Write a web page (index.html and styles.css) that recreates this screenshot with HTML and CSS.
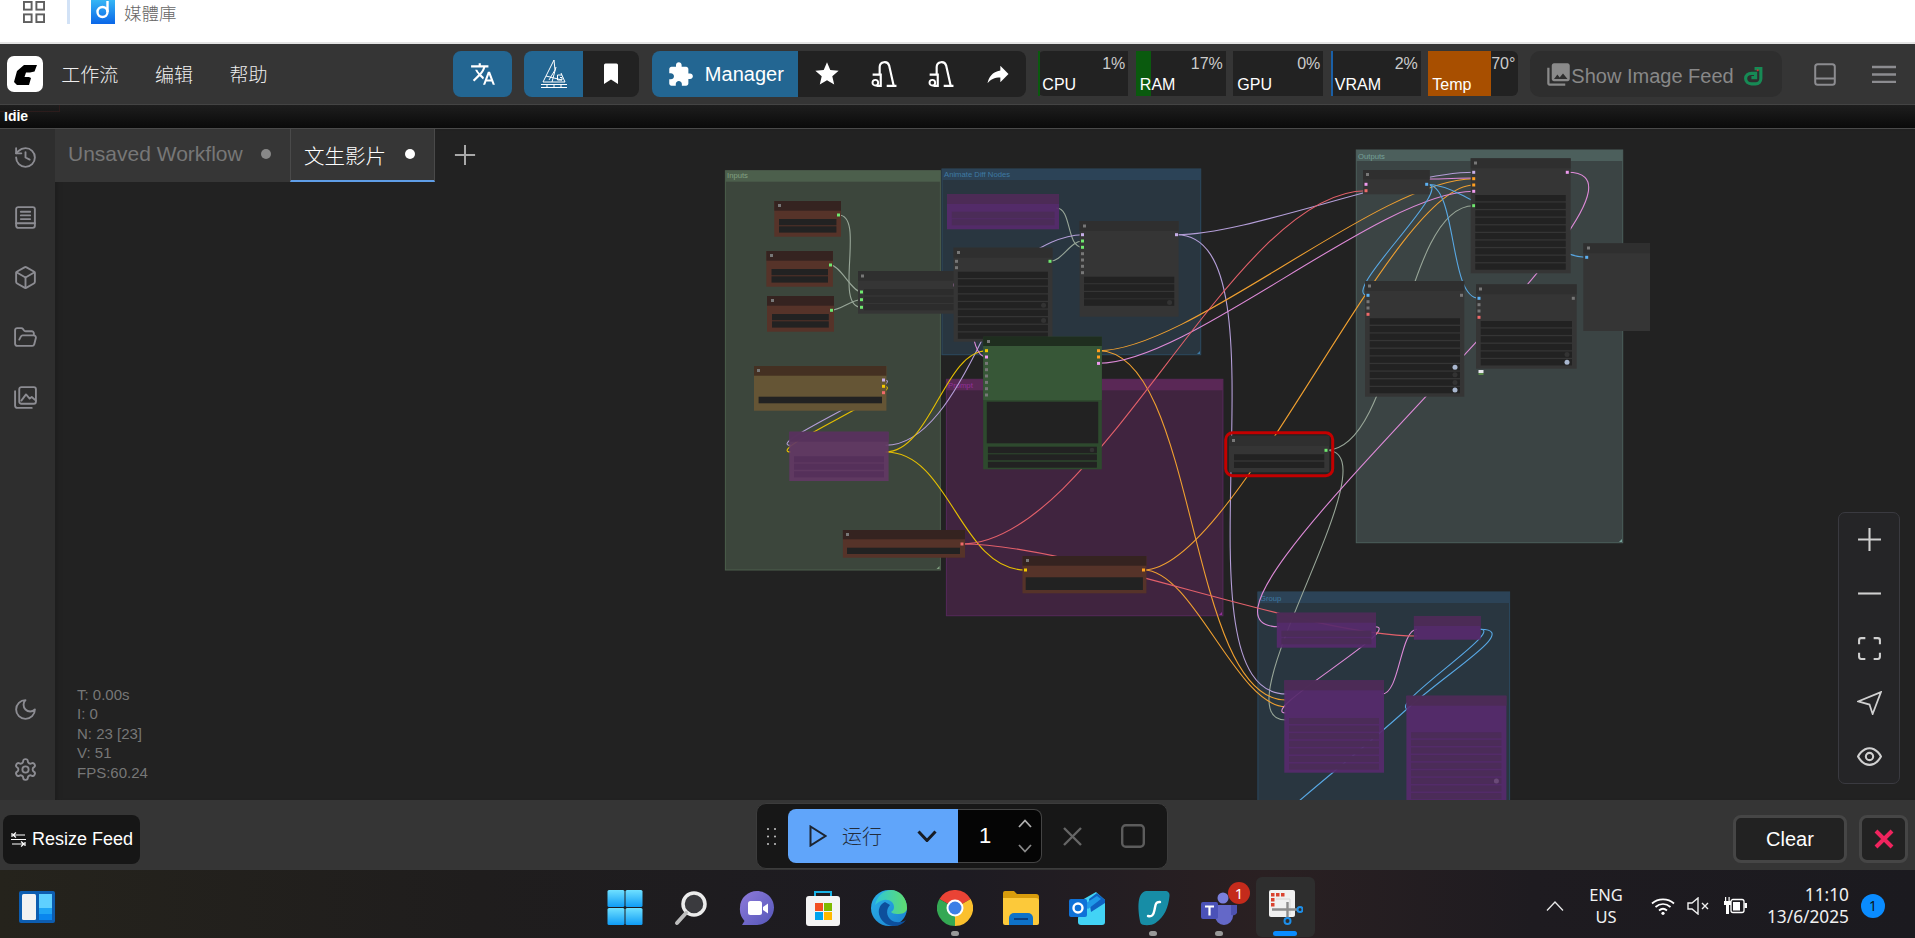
FILE: index.html
```html
<!DOCTYPE html>
<html lang="zh">
<head>
<meta charset="utf-8">
<title>ComfyUI</title>
<link rel="stylesheet" href="styles.css">
</head>
<body>
<header class="browserbar">
  <svg class="apps" viewBox="0 0 23 23"><g fill="none" stroke="#5f5f5f" stroke-width="2"><rect x="1" y="1" width="8" height="8"/><rect x="14" y="1" width="8" height="8"/><rect x="1" y="14" width="8" height="8"/><rect x="14" y="14" width="8" height="8"/></g></svg>
  <span class="browser-divider"></span>
  <svg class="doc-icon" viewBox="0 0 24 24"><defs><linearGradient id="dg" x1="0" y1="0" x2="0" y2="1"><stop offset="0" stop-color="#35b6f5"/><stop offset="1" stop-color="#0a66e8"/></linearGradient></defs><rect width="24" height="24" fill="url(#dg)"/><circle cx="11.500" cy="12" r="5" fill="none" stroke="#fff" stroke-width="2.400"/><path d="M16.500 1v11" stroke="#fff" stroke-width="2.400"/></svg>
  <span class="doc-title">媒體庫</span>
</header>

<nav class="menubar">
  <svg class="logo" viewBox="0 0 36 36"><rect width="36" height="36" rx="7" fill="#fff"/><path d="M17 9H30L27.500 15.500 23 16.500H19L17.500 21H22L24 22 22 29H10L7 26 10 15Z" fill="#000"/></svg>
  <div class="menu">
    <span class="menu-item">工作流</span><span class="menu-item">编辑</span><span class="menu-item">帮助</span>
  </div>
  <button class="tool blue translate"><svg class="ic26" viewBox="0 0 24 24"><path fill="#fff" d="M12.870 15.070l-2.540-2.510.03-.03c1.740-1.940 2.980-4.170 3.710-6.530H17V4h-7V2H8v2H1v1.990h11.170C11.500 7.920 10.440 9.750 9 11.350 8.070 10.320 7.300 9.190 6.690 8h-2c.73 1.630 1.730 3.170 2.980 4.560l-5.090 5.020L4 19l5-5 3.110 3.110.76-2.040zM18.500 10h-2L12 22h2l1.120-3h4.750L21 22h2l-4.500-12zm-2.620 7l1.620-4.330L19.120 17h-3.240z"/></svg></button>
  <div class="toolgroup g-crane">
    <button class="tool blue seg59"><svg class="ic30" viewBox="0 0 28 30"><g fill="none" stroke="#fff" stroke-width="1"><path d="M14 1 3 23H25L21 14"/><path d="M14 1 15 11 9 21M16 8 12 23M6 17 22 21"/><path d="M22 16H17.500V21H22V18.500H20"/><path d="M1 25.500H27M1 28.500H27M7 25.500V28.500M14 25.500V28.500M21 25.500V28.500"/></g></svg></button>
    <button class="tool dark seg56"><svg class="ic24" viewBox="0 0 24 24"><path fill="#fff" d="M5 3a1.500 1.500 0 0 1 1.500-1.500h11A1.500 1.500 0 0 1 19 3v19l-7-4.500L5 22z"/></svg></button>
  </div>
  <div class="toolgroup g-manager">
    <button class="tool blue manager"><svg class="ic27" viewBox="0 0 24 24"><path fill="#fff" d="M20.500 11H19V7c0-1.100-.9-2-2-2h-4V3.500C13 2.120 11.880 1 10.500 1S8 2.120 8 3.500V5H4c-1.100 0-1.990.9-1.990 2v3.800H3.500c1.490 0 2.700 1.210 2.700 2.700s-1.210 2.700-2.700 2.700H2V20c0 1.100.9 2 2 2h3.800v-1.500c0-1.490 1.210-2.700 2.700-2.700 1.490 0 2.700 1.210 2.700 2.700V22H17c1.100 0 2-.9 2-2v-4h1.500c1.380 0 2.500-1.120 2.500-2.500S21.880 11 20.500 11z"/></svg><span>Manager</span></button>
    <button class="tool dark seg57"><svg class="ic28" viewBox="0 0 24 24"><path fill="#fff" d="M12 17.270 18.180 21l-1.640-7.030L22 9.240l-7.190-.61L12 2 9.190 8.630 2 9.240l5.460 4.730L5.820 21z"/></svg></button>
    <button class="tool dark seg57"><svg class="ic26" viewBox="0 0 24 24"><g fill="none" stroke="#fff" stroke-width="2"><path d="M8 12V5.500a4.500 4.500 0 0 1 8.800-1.200L21 23"/><path d="M14.500 23h9"/><path d="M1.500 12.500h7.500V23H5"/></g><circle cx="4" cy="20" r="2.600" fill="none" stroke="#fff" stroke-width="1.800"/></svg></button>
    <button class="tool dark seg57"><svg class="ic26" viewBox="0 0 24 24"><g fill="none" stroke="#fff" stroke-width="2"><path d="M8 12V5.500a4.500 4.500 0 0 1 8.800-1.200L21 23"/><path d="M14.500 23h9"/><path d="M1.500 12.500h7.500V23H5"/></g><circle cx="4" cy="20" r="2.600" fill="none" stroke="#fff" stroke-width="1.800"/></svg></button>
    <button class="tool dark seg57"><svg class="ic28" viewBox="0 0 24 24"><path fill="#fff" d="M14 9V5l7 7-7 7v-4.100c-5 0-8.500 1.600-11 5.100 1-5 4-10 11-11z"/></svg></button>
  </div>
  <div class="monitors">
    <div class="mon first"><i class="bar green" style="width:2px"></i><b>1%</b><span>CPU</span></div>
    <div class="mon"><i class="bar green" style="width:17%"></i><b>17%</b><span>RAM</span></div>
    <div class="mon"><i class="bar green" style="width:0"></i><b>0%</b><span>GPU</span></div>
    <div class="mon"><i class="bar blue" style="width:2%"></i><b>2%</b><span>VRAM</span></div>
    <div class="mon last"><i class="bar orange" style="width:70%"></i><b>70°</b><span>Temp</span></div>
  </div>
  <button class="feed-toggle">
    <svg class="ic27" viewBox="0 0 24 24"><path fill="#8a8a8a" d="M22 16V4c0-1.100-.9-2-2-2H8c-1.100 0-2 .9-2 2v12c0 1.100.9 2 2 2h12c1.100 0 2-.9 2-2zm-11-4 2.030 2.710L16 11l4 5H8l3-4zM2 6v14c0 1.100.9 2 2 2h14v-2H4V6H2z"/></svg>
    <span>Show Image Feed</span>
    <svg class="snake" viewBox="0 0 20 20"><path fill="none" stroke="#178a55" stroke-width="3" d="M11 2.500h6V12c0 3-2 5-5 5H8c-3 0-5.500-2-5.500-5S5 7 8 7h4v4H8"/><circle cx="14" cy="4" r="1" fill="#c33"/></svg>
  </button>
  <svg class="panel-icon" viewBox="0 0 22 23"><rect x="1.200" y="1.200" width="19.600" height="20.600" rx="2.500" fill="none" stroke="#8c8c90" stroke-width="2"/><path d="M1.500 15.500h19" stroke="#8c8c90" stroke-width="2"/></svg>
  <svg class="burger" viewBox="0 0 24 18"><path d="M0 2h24M0 9.500h24M0 17h24" stroke="#8c8c90" stroke-width="2.400"/></svg>
</nav>

<div class="statusbar"><span class="status-mark"></span>Idle</div>

<main class="workspace">
  <aside class="sidebar">
    <div class="side-group top">
      <button class="side-btn"><svg viewBox="0 0 24 24"><path d="M3 12a9 9 0 1 0 9-9 9.750 9.750 0 0 0-6.740 2.740L3 8"/><path d="M3 3v5h5"/><path d="M12 7v5l4 2"/></svg></button>
      <button class="side-btn"><svg viewBox="0 0 24 24"><rect x="3" y="2" width="18" height="20" rx="2"/><path d="M3 17.500h18M7.500 6.500h9M7.500 10h9M7.500 13.500h9"/></svg></button>
      <button class="side-btn"><svg viewBox="0 0 24 24"><path d="M21 8a2 2 0 0 0-1-1.730l-7-4a2 2 0 0 0-2 0l-7 4A2 2 0 0 0 3 8v8a2 2 0 0 0 1 1.730l7 4a2 2 0 0 0 2 0l7-4A2 2 0 0 0 21 16Z"/><path d="m3.300 7 8.700 5 8.700-5"/><path d="M12 22V12"/></svg></button>
      <button class="side-btn"><svg viewBox="0 0 24 24"><path d="m6 14 1.500-2.900A2 2 0 0 1 9.240 10H20a2 2 0 0 1 1.940 2.500l-1.540 6a2 2 0 0 1-1.950 1.500H4a2 2 0 0 1-2-2V5a2 2 0 0 1 2-2h3.900a2 2 0 0 1 1.690.9l.81 1.200a2 2 0 0 0 1.670.9H18a2 2 0 0 1 2 2v2"/></svg></button>
      <button class="side-btn"><svg viewBox="0 0 24 24"><path d="M18 22H4a2 2 0 0 1-2-2V6"/><rect width="16" height="16" x="6" y="2" rx="2"/><path d="m8 15 4.500-6 3.500 4 2-1.500 4 3.500"/></svg></button>
    </div>
    <div class="side-group">
      <button class="side-btn"><svg viewBox="0 0 24 24"><path d="M12 3a6 6 0 0 0 9 9 9 9 0 1 1-9-9Z"/></svg></button>
      <button class="side-btn"><svg viewBox="0 0 24 24"><path d="M12.220 2h-.44a2 2 0 0 0-2 2v.18a2 2 0 0 1-1 1.730l-.43.25a2 2 0 0 1-2 0l-.15-.08a2 2 0 0 0-2.730.73l-.22.38a2 2 0 0 0 .73 2.730l.15.1a2 2 0 0 1 1 1.720v.51a2 2 0 0 1-1 1.740l-.15.09a2 2 0 0 0-.73 2.730l.22.38a2 2 0 0 0 2.730.73l.15-.08a2 2 0 0 1 2 0l.43.25a2 2 0 0 1 1 1.730V20a2 2 0 0 0 2 2h.44a2 2 0 0 0 2-2v-.18a2 2 0 0 1 1-1.730l.43-.25a2 2 0 0 1 2 0l.15.08a2 2 0 0 0 2.730-.73l.22-.39a2 2 0 0 0-.73-2.730l-.15-.08a2 2 0 0 1-1-1.740v-.5a2 2 0 0 1 1-1.740l.15-.09a2 2 0 0 0 .73-2.730l-.22-.38a2 2 0 0 0-2.730-.73l-.15.08a2 2 0 0 1-2 0l-.43-.25a2 2 0 0 1-1-1.730V4a2 2 0 0 0-2-2z"/><circle cx="12" cy="12" r="3"/></svg></button>
    </div>
  </aside>

  <section class="canvas-area">
    <svg class="graph" viewBox="55 129 1860 671">
      <!-- groups -->
      <g class="group g-in"><rect class="gb" x="725.400" y="170.700" width="215" height="399.300"/><rect class="gh" x="725.400" y="170.700" width="215" height="11"/><text x="727" y="178">Inputs</text><path class="gc" d="M939.500 569V566L936.500 569Z"/></g>
      <g class="group g-ad"><rect class="gb" x="942" y="169" width="258.700" height="185.700"/><rect class="gh" x="942" y="169" width="258.700" height="11"/><text x="944" y="177">Animate Diff Nodes</text><path class="gc" d="M1200 354V351L1197 354Z"/></g>
      <g class="group g-pr"><rect class="gb" x="946.400" y="379.300" width="276.500" height="236.400"/><rect class="gh" x="946.400" y="379.300" width="276.500" height="11"/><text x="948" y="387.500">Prompt</text><path class="gc" d="M1222 615V612L1219 615Z"/></g>
      <g class="group g-out"><rect class="gb" x="1356.300" y="150" width="266.400" height="392.700"/><rect class="gh" x="1356.300" y="150" width="266.400" height="11"/><text x="1358" y="158.500">Outputs</text><path class="gc" d="M1622 542V539L1619 542Z"/></g>
      <g class="group g-gr"><rect class="gb" x="1257.900" y="592" width="251.700" height="230"/><rect class="gh" x="1257.900" y="592" width="251.700" height="11"/><text x="1260" y="600.500">Group</text></g>

      <!-- links -->
      <g class="wires">
        <path class="w-g" d="M838.600 215C866 215 833 307.300 861.400 307.300"/>
        <path class="w-g" d="M830.400 265C840 265 852 292 861.400 292"/>
        <path class="w-g" d="M831 310.300C841 310.300 851 299.700 861.400 299.700"/>
        <path class="w-g" d="M1056.400 208C1072 208 1066 247.300 1082.500 247.300"/>
        <path class="w-g" d="M1050 261.300C1062 261.300 1070 241 1082.500 241"/>
        <path class="w-g" d="M1326 450.300C1398 450.300 1402 205.700 1473.700 205.700"/>
        <path class="w-g" d="M1326 450.300C1398 450.300 1214 720 1286 720"/>
        <path class="w-l" d="M955 285C1000 285 1040 234.700 1082.500 234.700"/>
        <path class="w-l" d="M1176.400 234.700C1250 234.700 1400 172.300 1473.700 172.300"/>
        <path class="w-l" d="M1176.400 234.700C1296 234.700 1166 694 1286.400 694"/>
        <path class="w-l" d="M883.600 380C913 380 761 445.300 791 445.300"/>
        <path class="w-l" d="M885.700 445.300C925 445.300 955 395 982 340"/>
        <path class="w-y" d="M883.600 386.300C913 386.300 761 452 791 452"/>
        <path class="w-y" d="M885.700 452C930 452 945 350.700 986.400 350.700"/>
        <path class="w-y" d="M885.700 452C950 452 960 570 1025.400 570"/>
        <path class="w-p" d="M955 285C975 285 966 357 986.400 357"/>
        <path class="w-o" d="M1098.600 350.700C1197.600 350.700 1187 700 1286 700"/>
        <path class="w-o" d="M1098.600 350.700C1190 350.700 1380 178.700 1473.700 178.700"/>
        <path class="w-o" d="M1143.600 570C1235 570 1392 185 1473.700 185"/>
        <path class="w-o" d="M1143.600 570C1193 570 1237 706.700 1286 706.700"/>
        <path class="w-p" d="M1098.600 363.300C1190 363.300 1380 191.300 1473.700 191.300"/>
        <path class="w-p" d="M1429 179C1445 179 1458 178 1473.700 178"/>
        <path class="w-p" d="M1567.300 172.300C1703 172.300 1143 626.700 1279 626.700"/>
        <path class="w-p" d="M1375 626.700C1406 626.700 1255 713 1286 713"/>
        <path class="w-p" d="M1382 694C1400 694 1400 629.300 1417 629.300"/>
        <path class="w-r" d="M962 544C1096 544 1232 190.700 1366 190.700"/>
        <path class="w-r" d="M962 544C1077 544 1302 636 1417 636"/>
        <path class="w-b" d="M1426.700 184.300C1469 184.300 1544 257.300 1586.700 257.300"/>
        <path class="w-b" d="M1426.700 184.300C1458 184.300 1448 298.300 1479 298.300"/>
        <path class="w-b" d="M1426.700 184.300C1458 184.300 1337 295.300 1368 295.300"/>
        <path class="w-b" d="M1480.400 629.300C1506 629.300 1383 709 1409 709"/>
        <path class="w-b" d="M1480.400 629.300C1520 629.300 1450 670 1407 709S1320 782 1270 826"/>
      </g>

      <!-- brown nodes -->
      <g class="node brown">
        <rect class="body" x="774.300" y="201" width="66.700" height="35.700"/><rect class="head" x="774.300" y="201" width="66.700" height="9.700"/><rect class="pin" x="778" y="204"/>
        <rect class="row" x="779" y="219" width="57.400" height="6.300"/><rect class="row" x="779" y="226.300" width="57.400" height="6.300"/><rect class="d green" x="837" y="213.500"/>
      </g>
      <g class="node brown">
        <rect class="body" x="766.400" y="251" width="66.500" height="35.700"/><rect class="head" x="766.400" y="251" width="66.500" height="9.700"/><rect class="pin" x="770" y="254"/>
        <rect class="row" x="771.500" y="269" width="56.500" height="6.300"/><rect class="row" x="771.500" y="276.300" width="56.500" height="6.300"/><rect class="d green" x="829" y="263.500"/>
      </g>
      <g class="node brown">
        <rect class="body" x="767" y="296" width="67" height="35.700"/><rect class="head" x="767" y="296" width="67" height="9.700"/><rect class="pin" x="771" y="299"/>
        <rect class="row" x="772" y="314" width="56.800" height="6.300"/><rect class="row" x="772" y="321.300" width="56.800" height="6.300"/><rect class="d green" x="830" y="308.800"/>
      </g>

      <!-- dark nodes -->
      <g class="node dark">
        <rect class="body" x="858" y="271" width="99" height="42.700"/><rect class="head" x="858" y="271" width="99" height="9.700"/><rect class="pin" x="861" y="274.500"/>
        <rect class="row soft" x="864" y="289" width="90" height="6.300"/><rect class="row soft" x="864" y="296.700" width="90" height="6.300"/><rect class="row soft" x="864" y="304" width="90" height="6.300"/>
        <rect class="d green" x="860" y="290.500"/><rect class="d green" x="860" y="298.200"/><rect class="d green" x="860" y="305.800"/><rect class="d pink" x="953.500" y="283.500"/>
      </g>
      <g class="node dark">
        <rect class="body" x="953.600" y="247.700" width="98.900" height="94"/><rect class="head" x="953.600" y="247.700" width="98.900" height="10"/><rect class="pin" x="957" y="251"/>
        <rect class="d gray" x="955" y="259.800"/><rect class="d gray" x="955" y="266.200"/><rect class="d green" x="1048.500" y="259.800"/>
        <rect class="row" x="957.900" y="271.700" width="90" height="6.300"/><rect class="row" x="957.900" y="279.300" width="90" height="6.300"/><rect class="row" x="957.900" y="286.900" width="90" height="6.300"/><rect class="row" x="957.900" y="294.500" width="90" height="6.300"/><rect class="row" x="957.900" y="302.100" width="90" height="6.300"/><rect class="row" x="957.900" y="309.700" width="90" height="6.300"/><rect class="row" x="957.900" y="317.300" width="90" height="6.300"/><rect class="row" x="957.900" y="324.900" width="90" height="6.300"/><rect class="row" x="957.900" y="332.500" width="90" height="6.300"/>
        <circle class="tg off" cx="1043.600" cy="305.200" r="2.500"/><circle class="tg off" cx="1043.600" cy="320.400" r="2.500"/>
      </g>
      <g class="node dark">
        <rect class="body" x="1079.600" y="221" width="99" height="95.700"/><rect class="head" x="1079.600" y="221" width="99" height="10"/><rect class="pin" x="1083" y="224.500"/>
        <rect class="d lav" x="1081" y="233.200"/><rect class="d green" x="1081" y="239.500"/><rect class="d green" x="1081" y="245.800"/><rect class="d gray" x="1081" y="252.200"/><rect class="d gray" x="1081" y="258.500"/><rect class="d gray" x="1081" y="264.800"/><rect class="d gray" x="1081" y="271.200"/><rect class="d lav" x="1175" y="233.200"/>
        <rect class="row" x="1084" y="276.700" width="90.300" height="6.500"/><rect class="row" x="1084" y="284.300" width="90.300" height="6.500"/><rect class="row" x="1084" y="292" width="90.300" height="6.500"/><rect class="row" x="1084" y="299.300" width="90.300" height="6.500"/><circle class="tg off" cx="1169.600" cy="302.500" r="2.500"/>
      </g>

      <!-- purple node in AnimateDiff -->
      <g class="node purple">
        <rect class="body" x="947" y="194" width="112" height="35.300"/><rect class="head" x="947" y="194" width="112" height="10"/>
        <rect class="row" x="951.800" y="211.700" width="102.800" height="6.600"/><rect class="row" x="951.800" y="219.300" width="102.800" height="6"/>
      </g>

      <!-- green sampler -->
      <g class="node greenn">
        <rect class="frame" x="983.200" y="336.700" width="118.600" height="132.600"/><rect class="head" x="983.200" y="336.700" width="118.600" height="9.300"/><rect class="body" x="983.200" y="346" width="118.600" height="54"/><rect class="pin" x="987" y="340"/>
        <rect class="d yel" x="985" y="349.200"/><rect class="d pink" x="985" y="355.500"/><rect class="d gray" x="985" y="361.900"/><rect class="d gray" x="985" y="368.200"/><rect class="d gray" x="985" y="374.500"/><rect class="d gray" x="985" y="380.900"/><rect class="d gray" x="985" y="387.200"/><rect class="d gray" x="985" y="393.500"/>
        <rect class="d org" x="1097" y="349.200"/><rect class="d org" x="1097" y="355.500"/><rect class="d pink" x="1097" y="361.900"/>
        <rect class="row" x="986.800" y="401.700" width="111.400" height="41.600"/>
        <rect class="row" x="987.900" y="446.700" width="109" height="6.600"/><rect class="row" x="987.900" y="454.300" width="109" height="6"/><rect class="row" x="987.900" y="461.700" width="109" height="6"/><circle class="tg off" cx="1092" cy="450" r="2.300"/>
      </g>

      <!-- yellow loader -->
      <g class="node yellow">
        <rect class="body" x="754" y="366" width="132.400" height="44.700"/><rect class="head" x="754" y="366" width="132.400" height="9.700"/><rect class="pin" x="757" y="369"/>
        <rect class="row" x="758.600" y="396.700" width="123.400" height="6.600"/>
        <rect class="d lav" x="882" y="378.500"/><rect class="d yel" x="882" y="384.800"/><rect class="d red" x="882" y="391.200"/>
      </g>

      <!-- bypassed lora -->
      <g class="node plum">
        <rect class="body" x="789.300" y="431.700" width="99.300" height="49.300"/><rect class="head" x="789.300" y="431.700" width="99.300" height="10"/>
        <rect class="row" x="794" y="456.300" width="90" height="6"/><rect class="row" x="794" y="463.700" width="90" height="6"/><rect class="row" x="794" y="471.300" width="90" height="6"/>
      </g>

      <!-- brown text nodes -->
      <g class="node brown">
        <rect class="body" x="842.900" y="530" width="122.100" height="27.700"/><rect class="head" x="842.900" y="530" width="122.100" height="9.300"/><rect class="pin" x="846" y="533"/>
        <rect class="row" x="847" y="547.700" width="113" height="6.300"/><rect class="d red" x="960.500" y="542.500"/>
      </g>
      <g class="node brown">
        <rect class="body" x="1022.500" y="556" width="123.900" height="37.300"/><rect class="head" x="1022.500" y="556" width="123.900" height="9.700"/><rect class="pin" x="1026" y="559"/>
        <rect class="row" x="1025.700" y="577.300" width="117.200" height="12.700"/><rect class="d yel" x="1024" y="568.500"/><rect class="d org" x="1142" y="568.500"/>
      </g>

      <!-- selected node -->
      <g class="node dark">
        <rect class="body" x="1229" y="435.700" width="100.300" height="36.600"/><rect class="head" x="1229" y="435.700" width="100.300" height="10.300"/><rect class="pin" x="1232" y="439"/>
        <rect class="row" x="1234" y="454.300" width="90.300" height="6"/><rect class="row" x="1234" y="461.700" width="90.300" height="6.300"/><rect class="d green" x="1324.500" y="448.800"/>
      </g>
      <rect class="selected" x="1225.700" y="432.700" width="107" height="43" rx="7"/>

      <!-- output nodes -->
      <g class="node dark">
        <rect class="body" x="1363" y="170" width="66.700" height="24.300"/><rect class="head" x="1363" y="170" width="66.700" height="9.300"/><rect class="pin" x="1366" y="173"/>
        <rect class="d pink" x="1364.500" y="182.800"/><rect class="d red" x="1364.500" y="189.200"/><rect class="d blue" x="1425.200" y="182.800"/>
      </g>
      <g class="node dark">
        <rect class="body" x="1470.700" y="158.300" width="100" height="115"/><rect class="head" x="1470.700" y="158.300" width="100" height="10"/><rect class="pin" x="1474" y="161.500"/>
        <rect class="d lav" x="1472.200" y="170.800"/><rect class="d org" x="1472.200" y="177.200"/><rect class="d org" x="1472.200" y="183.500"/><rect class="d pink" x="1472.200" y="189.800"/><rect class="d green" x="1472.200" y="204.200"/><rect class="d pink" x="1565.800" y="170.800"/>
        <rect class="row" x="1475.300" y="195" width="90.400" height="6.300"/><rect class="row" x="1475.300" y="202.600" width="90.400" height="6.300"/><rect class="row" x="1475.300" y="210.200" width="90.400" height="6.300"/><rect class="row" x="1475.300" y="217.800" width="90.400" height="6.300"/><rect class="row" x="1475.300" y="225.400" width="90.400" height="6.300"/><rect class="row" x="1475.300" y="233" width="90.400" height="6.300"/><rect class="row" x="1475.300" y="240.600" width="90.400" height="6.300"/><rect class="row" x="1475.300" y="248.200" width="90.400" height="6.300"/><rect class="row" x="1475.300" y="255.800" width="90.400" height="6.300"/><rect class="row" x="1475.300" y="263.400" width="90.400" height="6.300"/>
      </g>
      <g class="node dark">
        <rect class="body" x="1583.300" y="243.300" width="66.700" height="87.700"/><rect class="head" x="1583.300" y="243.300" width="66.700" height="10"/><rect class="pin" x="1587" y="246.500"/><rect class="d blue" x="1585.200" y="255.800"/>
      </g>
      <g class="node dark">
        <rect class="body" x="1365" y="281" width="99.300" height="115.700"/><rect class="head" x="1365" y="281" width="99.300" height="10"/><rect class="pin" x="1368" y="284.500"/>
        <rect class="d blue" x="1366.500" y="293.800"/><rect class="d gray" x="1366.500" y="300.200"/><rect class="d gray" x="1366.500" y="306.500"/><rect class="d red" x="1366.500" y="312.800"/><rect class="d gray" x="1460" y="293.800"/>
        <rect class="row" x="1369.700" y="318.300" width="90.300" height="6.300"/><rect class="row" x="1369.700" y="326" width="90.300" height="6.300"/><rect class="row" x="1369.700" y="333.600" width="90.300" height="6.300"/><rect class="row" x="1369.700" y="341.200" width="90.300" height="6.300"/><rect class="row" x="1369.700" y="348.900" width="90.300" height="6.300"/><rect class="row" x="1369.700" y="356.500" width="90.300" height="6.300"/><rect class="row" x="1369.700" y="364.100" width="90.300" height="6.300"/><rect class="row" x="1369.700" y="371.700" width="90.300" height="6.300"/><rect class="row" x="1369.700" y="379.400" width="90.300" height="6.300"/><rect class="row" x="1369.700" y="387" width="90.300" height="6.300"/>
        <circle class="tg on" cx="1455" cy="367.200" r="2.500"/><circle class="tg off" cx="1455" cy="374.800" r="2.500"/><circle class="tg off" cx="1455" cy="382.500" r="2.500"/><circle class="tg on" cx="1455" cy="390.100" r="2.500"/>
      </g>
      <g class="node dark">
        <rect class="body" x="1476" y="284.300" width="100.700" height="84.400"/><rect class="head" x="1476" y="284.300" width="100.700" height="10"/><rect class="pin" x="1479" y="287.500"/>
        <rect class="d blue" x="1477.500" y="296.800"/><rect class="d gray" x="1477.500" y="303.200"/><rect class="d gray" x="1477.500" y="309.500"/><rect class="d red" x="1477.500" y="315.800"/><rect class="d gray" x="1571.800" y="296.800"/>
        <rect class="row" x="1480.700" y="321" width="91.300" height="6.300"/><rect class="row" x="1480.700" y="328.600" width="91.300" height="6.300"/><rect class="row" x="1480.700" y="336.200" width="91.300" height="6.300"/><rect class="row" x="1480.700" y="343.900" width="91.300" height="6.300"/><rect class="row" x="1480.700" y="351.500" width="91.300" height="6.300"/><rect class="row" x="1480.700" y="359.100" width="91.300" height="6.300"/>
        <circle class="tg off" cx="1567" cy="354.600" r="2.500"/><circle class="tg on" cx="1567" cy="362.300" r="2.500"/>
      </g>
      <rect class="thumb-a" x="1478.500" y="370" width="5" height="3"/><rect class="thumb-b" x="1478.500" y="373" width="5" height="2"/>

      <!-- group nodes (bypassed) -->
      <g class="node purple">
        <rect class="body" x="1276.800" y="612.700" width="99.200" height="35"/><rect class="head" x="1276.800" y="612.700" width="99.200" height="10"/>
        <rect class="row" x="1281.400" y="630.700" width="90" height="6"/><rect class="row" x="1281.400" y="638.300" width="90" height="6"/>
      </g>
      <g class="node purple">
        <rect class="body" x="1413.900" y="616" width="66.800" height="23.700"/><rect class="head" x="1413.900" y="616" width="66.800" height="10"/>
      </g>
      <g class="node purple">
        <rect class="body" x="1284.300" y="680.300" width="99.700" height="92.400"/><rect class="head" x="1284.300" y="680.300" width="99.700" height="10"/>
        <rect class="row" x="1289" y="718" width="90" height="6"/><rect class="row" x="1289" y="725.600" width="90" height="6"/><rect class="row" x="1289" y="733.200" width="90" height="6"/><rect class="row" x="1289" y="740.800" width="90" height="6"/><rect class="row" x="1289" y="748.400" width="90" height="6"/><rect class="row" x="1289" y="756" width="90" height="6"/><rect class="row" x="1289" y="763.600" width="90" height="6"/>
      </g>
      <g class="node purple">
        <rect class="body" x="1406.400" y="695.700" width="100" height="120"/><rect class="head" x="1406.400" y="695.700" width="100" height="10"/>
        <rect class="row" x="1411" y="732.300" width="90.400" height="6"/><rect class="row" x="1411" y="739.900" width="90.400" height="6"/><rect class="row" x="1411" y="747.500" width="90.400" height="6"/><rect class="row" x="1411" y="755.100" width="90.400" height="6"/><rect class="row" x="1411" y="762.700" width="90.400" height="6"/><rect class="row" x="1411" y="770.300" width="90.400" height="6"/><rect class="row" x="1411" y="777.900" width="90.400" height="6"/><rect class="row" x="1411" y="785.500" width="90.400" height="6"/><rect class="row" x="1411" y="793.100" width="90.400" height="6"/>
        <circle class="tg dim" cx="1496.400" cy="781" r="2.500"/>
      </g>
    </svg>

    <div class="tabs">
      <div class="tab"><span class="tab-name muted">Unsaved Workflow</span><i class="tab-dot gray-dot"></i></div>
      <div class="tab active"><span class="tab-name">文生影片</span><i class="tab-dot"></i></div>
      <svg class="tab-add" viewBox="0 0 24 24"><path d="M12 1v22M1 12h22" stroke="#a8a8a8" stroke-width="2.200"/></svg>
    </div>

    <div class="stats"><div>T: 0.00s</div><div>I: 0</div><div>N: 23 [23]</div><div>V: 51</div><div>FPS:60.24</div></div>

    <div class="zoombar">
      <svg viewBox="0 0 24 24"><path d="M12 1v22M1 12h22"/></svg>
      <svg viewBox="0 0 24 24"><path d="M1 12h22"/></svg>
      <svg viewBox="0 0 24 24"><path d="M2 8V4a2 2 0 0 1 2-2h4M16 2h4a2 2 0 0 1 2 2v4M22 16v4a2 2 0 0 1-2 2h-4M8 22H4a2 2 0 0 1-2-2v-4"/></svg>
      <svg viewBox="0 0 24 24" class="thin"><path d="M23 2 1 11l11 3 3 9z"/></svg>
      <svg viewBox="0 0 24 24"><path d="M1 12s4-8 11-8 11 8 11 8-4 8-11 8-11-8-11-8z"/><circle cx="12" cy="12" r="3.500"/></svg>
    </div>
  </section>
</main>

<footer class="bottombar">
  <button class="resize-feed">
    <svg class="resize-ic" viewBox="0 0 15 15"><g fill="none" stroke="#fff" stroke-width="1.200"><path d="M1 1v4M1 3h13M5 .5 2 3l3 2.500"/><path d="M14 10v4M14 12H1M10 9.500l3 2.500-3 2.500"/><path d="M0 7.500h15" stroke-width="1"/></g></svg>
    <span>Resize Feed</span>
  </button>
  <div class="runbar">
    <svg class="grip" viewBox="0 0 9 17"><g fill="#c8c8c8"><circle cx="1" cy="1" r="1"/><circle cx="8" cy="1" r="1"/><circle cx="1" cy="8.500" r="1"/><circle cx="8" cy="8.500" r="1"/><circle cx="1" cy="16" r="1"/><circle cx="8" cy="16" r="1"/></g></svg>
    <button class="run">
      <svg class="play" viewBox="0 0 18 22"><path d="M1.500 1.500 16.500 11 1.500 20.500Z" fill="none" stroke="#1c2430" stroke-width="2"/></svg>
      <span>运行</span>
      <svg class="run-chev" viewBox="0 0 20 12"><path d="M1.500 1.500 10 10.500 18.500 1.500" fill="none" stroke="#171c24" stroke-width="3"/></svg>
    </button>
    <div class="count">
      <span>1</span>
      <div class="steppers">
        <svg viewBox="0 0 14 9"><path d="M1 8 7 1.500 13 8" fill="none" stroke="#b0b0b0" stroke-width="1.800"/></svg>
        <svg viewBox="0 0 14 9"><path d="M1 1 7 7.500 13 1" fill="none" stroke="#8a8a8a" stroke-width="1.800"/></svg>
      </div>
    </div>
    <svg class="run-x" viewBox="0 0 19 19"><path d="M1 1 18 18M18 1 1 18" stroke="#666" stroke-width="2.400"/></svg>
    <svg class="run-stop" viewBox="0 0 24 24"><rect x="1.200" y="1.200" width="21.600" height="21.600" rx="3.500" fill="none" stroke="#5c5c5c" stroke-width="2.400"/></svg>
  </div>
  <button class="feed-btn clear">Clear</button>
  <button class="feed-btn close"><svg viewBox="0 0 20 20"><path d="M2 2 18 18M18 2 2 18" stroke="#f0245e" stroke-width="4"/></svg></button>
</footer>

<div class="taskbar">
  <div class="tb-left">
    <svg class="widgets" viewBox="0 0 36 32"><rect width="36" height="32" rx="2" fill="#0d5db0"/><rect x="3" y="3" width="14" height="26" rx="1.500" fill="#f2f2f2"/><rect x="20" y="3" width="13" height="14" fill="#5fd0ff"/><rect x="20" y="17" width="13" height="6" fill="#1fa5f5"/><rect x="20" y="23" width="13" height="6" fill="#0a86ee"/></svg>
  </div>
  <div class="tb-apps">
    <div class="tile"><svg viewBox="0 0 36 36"><defs><linearGradient id="st" x1="0" y1="0" x2="0" y2="1"><stop offset="0" stop-color="#6fe0ff"/><stop offset="1" stop-color="#0f9cf5"/></linearGradient></defs><g fill="url(#st)"><rect x="0.500" y="0" width="17" height="17" rx="1.500"/><rect x="18.500" y="0" width="17" height="17" rx="1.500"/><rect x="0.500" y="18" width="17" height="17" rx="1.500"/><rect x="18.500" y="18" width="17" height="17" rx="1.500"/></g></svg></div>
    <div class="tile"><svg viewBox="0 0 36 36"><circle cx="21" cy="14" r="11" fill="#3a3a3e" stroke="#ececec" stroke-width="3.500"/><path d="M13 23 4 33" stroke="#bdbdbd" stroke-width="4" stroke-linecap="round"/></svg></div>
    <div class="tile"><svg viewBox="0 0 36 36"><defs><linearGradient id="mt" x1="0" y1="0" x2="1" y2="1"><stop offset="0" stop-color="#8f7bdc"/><stop offset="1" stop-color="#5456b8"/></linearGradient></defs><path d="M18 1c9 0 17 7 17 16.500S27 35 18 35H3l2.500-4A17 17 0 0 1 1 17.500C1 8 9 1 18 1z" fill="url(#mt)"/><rect x="9" y="11" width="14" height="14" rx="2.500" fill="#fff"/><path d="M24 17l5-3.500v10L24 20z" fill="#fff"/></svg></div>
    <div class="tile"><svg viewBox="0 0 36 36"><path d="M10 7V2h16v5" fill="none" stroke="#19b3e6" stroke-width="2"/><rect x="1" y="6" width="34" height="30" rx="3" fill="#f4f4f4"/><rect x="10" y="13" width="8" height="8" fill="#f25022"/><rect x="19" y="13" width="8" height="8" fill="#7fba00"/><rect x="10" y="22" width="8" height="8" fill="#00a4ef"/><rect x="19" y="22" width="8" height="8" fill="#ffb900"/></svg></div>
    <div class="tile"><svg viewBox="0 0 36 36"><defs><linearGradient id="eg" x1="0" y1="0" x2="1" y2="1"><stop offset="0" stop-color="#2bb4e8"/><stop offset="1" stop-color="#1a7fd0"/></linearGradient><linearGradient id="eh" x1="0" y1="0" x2="1" y2="0"><stop offset="0" stop-color="#2fc7d8"/><stop offset="1" stop-color="#5fdc6e"/></linearGradient></defs><circle cx="18" cy="18" r="18" fill="url(#eg)"/><path d="M4 15C6 5 14 0 20 0c9 0 16 8 16 18 0 5-5 6-10 6-3 0-5-1-6-2 2-1 3-3 3-5 0-5-5-8-10-7-4 .7-7 3-9 5z" fill="url(#eh)"/><path d="M14 12c-5 2-8 8-5 15 2 5 8 9 14 9 5 0 9-2 12-6-5 3-11 3-15 0-5-4-5-11-1-15z" fill="#0d4f9c"/></svg></div>
    <div class="tile run-dot"><svg viewBox="0 0 36 36"><path d="M18 18 2.400 9A18 18 0 0 1 33.600 9Z" fill="#ea4335"/><path d="M18 18 33.600 9A18 18 0 0 1 18 36Z" fill="#fbc02d"/><path d="M18 18 18 36A18 18 0 0 1 2.400 9Z" fill="#34a853"/><circle cx="18" cy="18" r="8.500" fill="#fff"/><circle cx="18" cy="18" r="6.500" fill="#3c7fe6"/></svg></div>
    <div class="tile"><svg viewBox="0 0 36 36"><path d="M0 3a2 2 0 0 1 2-2h9l3 3h19a3 3 0 0 1 3 3v4H0z" fill="#d89c0c"/><path d="M0 8h33a3 3 0 0 1 3 3v22a2 2 0 0 1-2 2H2a2 2 0 0 1-2-2z" fill="#fcc93a"/><path d="M6 35v-7a5 5 0 0 1 5-5h14a5 5 0 0 1 5 5v7z" fill="#0e72c9"/><rect x="11" y="28" width="14" height="2" fill="#0a3f80"/></svg></div>
    <div class="tile"><svg viewBox="0 0 36 36"><path d="M13 10 27 2l9 8v22a3 3 0 0 1-3 3H12a3 3 0 0 1-3-3v-4z" fill="#42d3f5"/><path d="M20 9 28 3l8 7v3L22 22z" fill="#0f62c2"/><path d="M14 15 28 6l4 3-13 10z" fill="#1f9ae8"/><rect x="0" y="9" width="18" height="18" rx="2" fill="#0f72d8"/><circle cx="9" cy="18" r="4.500" fill="none" stroke="#fff" stroke-width="2.400"/></svg></div>
    <div class="tile run-dot"><svg viewBox="0 0 36 36"><path d="M11 1h19c3 0 5 2 4.500 5-1 11-5 21-14 27-4 3-14 3-15 0C3 22 1 3 11 1z" fill="#178da6"/><path d="M13 26c4 1 5.500-1 6.500-6s1-8.500 5.500-8" fill="none" stroke="#fff" stroke-width="2.400" stroke-linecap="round"/></svg></div>
    <div class="tile run-dot"><svg viewBox="0 0 36 36"><circle cx="22" cy="8" r="5.500" fill="#7a7fdc"/><path d="M12 15h20v11a9 9 0 0 1-18 0z" fill="#6468c8"/><path d="M30 15h6v8a5 5 0 0 1-6 2z" fill="#4d52b0"/><rect x="0" y="12" width="17" height="17" rx="2" fill="#4b52b8"/><path d="M4 16.500h9M8.500 16.500v9" stroke="#fff" stroke-width="2.200"/></svg><b class="badge">1</b></div>
    <div class="tile active"><svg viewBox="0 0 36 36"><rect x="2" y="0" width="26" height="27" rx="2" fill="#f0f0f0"/><g fill="#d9432f"><rect x="4" y="3" width="3.500" height="3.500"/><rect x="9" y="3" width="3.500" height="3.500"/><rect x="14" y="3" width="3.500" height="3.500"/><rect x="4" y="8" width="3.500" height="3.500"/><rect x="4" y="13" width="3.500" height="3.500"/></g><path d="M9 9h14v16" fill="none" stroke="#d6d6d6" stroke-width="1"/><path d="M5 19.500H31M20.500 12V28" stroke="#8c8c8c" stroke-width="2.400" fill="none"/><circle cx="20.500" cy="31" r="3" fill="none" stroke="#1d8ee8" stroke-width="2"/><circle cx="33" cy="19.500" r="2.500" fill="none" stroke="#1d8ee8" stroke-width="2"/></svg></div>
  </div>
  <div class="tray">
    <svg class="tray-chev" viewBox="0 0 18 10"><path d="M1 9.500 9 1l8 8.500" fill="none" stroke="#e8e8e8" stroke-width="1.300"/></svg>
    <div class="lang"><span>ENG</span><span>US</span></div>
    <svg class="tray-wifi" viewBox="0 0 24 18"><g fill="none" stroke="#fff" stroke-width="1.700"><path d="M1 6.500C7 1 17 1 23 6.500"/><path d="M4.500 10C9 6 15 6 19.500 10"/><path d="M8 13.500C10.500 11.300 13.500 11.300 16 13.500"/></g><circle cx="12" cy="16.300" r="1.600" fill="#fff"/></svg>
    <svg class="tray-vol" viewBox="0 0 23 18"><g fill="none" stroke="#f0f0f0" stroke-width="1.400"><path d="M1 6h4l6-5v16l-6-5H1z"/><path d="M15 6l6 6M21 6l-6 6"/></g></svg>
    <svg class="tray-bat" viewBox="0 0 24 17"><g fill="#fff"><rect x="3" y="7" width="3" height="10"/><rect x="1" y="4" width="7" height="4"/><rect x="2" y="0" width="1.200" height="4"/><rect x="5.500" y="0" width="1.200" height="4"/><rect x="21.500" y="6" width="2.500" height="5"/></g><rect x="8" y="2.500" width="13" height="13" rx="2" fill="none" stroke="#fff" stroke-width="1.300"/><rect x="10" y="5" width="7" height="8.500" fill="#fff"/></svg>
    <div class="clock"><span>11:10</span><span>13/6/2025</span></div>
    <b class="notif">1</b>
  </div>
</div>
</body>
</html>
```

FILE: styles.css
```css
* { box-sizing: border-box; }
html, body { margin: 0; padding: 0; }
body {
  width: 1915px; height: 938px; overflow: hidden;
  display: flex; flex-direction: column;
  background: #222;
  font-family: "Liberation Sans", "Noto Sans CJK SC", sans-serif;
  color: #fff;
}
button { border: 0; padding: 0; margin: 0; font: inherit; color: inherit; background: none; }
svg { display: block; flex: none; }

/* browser strip */
.browserbar { height: 44px; flex: none; background: #fff; border-bottom: 2px solid #e4e4e4; display: flex; align-items: flex-start; padding-left: 23px; }
.apps { width: 22px; height: 22px; margin-top: 1px; }
.browser-divider { width: 3px; height: 24px; background: #d2e2f6; margin-left: 22px; }
.doc-icon { width: 24px; height: 24px; margin-left: 21px; }
.doc-title { margin-left: 9px; font: 17.500px/26px "Noto Sans CJK TC", sans-serif; color: #666; font-weight: 300; }

/* menu bar */
.menubar { height: 61px; flex: none; background: #353535; border-bottom: 1px solid #444; display: flex; align-items: center; padding-left: 7px; }
.logo { width: 36px; height: 36px; margin-top: 0; }
.menu { display: flex; margin-right: 167.500px; }
.menu-item { padding: 0 18.300px; font: 300 19px/28px "Noto Sans CJK SC", sans-serif; color: #eee; }
.tool { height: 46px; display: flex; align-items: center; justify-content: center; }
.tool.blue { background: #236692; }
.tool.dark { background: #222; }
.translate { width: 59px; border-radius: 8px; }
.toolgroup { display: flex; border-radius: 8px; overflow: hidden; margin-left: 12px; }
.g-manager { margin-left: 13px; }
.seg59 { width: 59px; }
.seg56 { width: 56px; }
.seg57 { width: 57px; }
.manager { width: 146px; gap: 11px; font-size: 20px; }
.ic24 { width: 24px; height: 24px; }
.ic26 { width: 26px; height: 26px; }
.ic27 { width: 27px; height: 27px; }
.ic28 { width: 28px; height: 28px; }
.ic30 { width: 28px; height: 30px; }

.monitors { display: flex; gap: 7.500px; margin-left: 12px; height: 46px; align-self: center; padding-bottom: 1px; }
.mon { position: relative; width: 90px; background: #222; padding: 4px 3px 0 4px; }
.mon.first { border-radius: 6px 0 0 6px; }
.mon.last { border-radius: 0 6px 6px 0; overflow: hidden; }
.mon b, .mon span { position: relative; display: block; font-weight: 400; font-size: 16px; line-height: 18px; }
.mon b { text-align: right; color: #ccc; }
.mon span { margin-top: 3px; color: #fff; }
.bar { position: absolute; left: 0; top: 0; bottom: 0; }
.bar.green { background: #0a5a0e; }
.bar.blue { background: #1a5fa6; }
.bar.orange { background: #a84f00; }

.feed-toggle { width: 252px; height: 46px; margin-left: 12px; background: #2e2e2e; border-radius: 10px; display: flex; align-items: center; padding-left: 15px; font-size: 20px; color: #888; }
.feed-toggle span { margin: 4px 0 0 -1px; }
.snake { width: 21px; height: 21px; margin: 4px 0 0 9px; }
.panel-icon { width: 22px; height: 23px; margin-left: 32px; }
.burger { width: 24px; height: 18px; margin-left: 36px; }

/* status */
.statusbar { position: relative; height: 23px; flex: none; background: linear-gradient(#1e1e1e, #0a0a0a); font-size: 14px; font-weight: 700; line-height: 23px; padding-left: 4px; }
.status-mark { position: absolute; left: 0; top: 0; width: 60px; height: 7px; border: solid #2c1c1c; border-width: 0 1px 1px 0; }

/* workspace */
.workspace { height: 672px; flex: none; display: flex; border-top: 1px solid #4a4a4a; }
.sidebar { width: 55px; flex: none; background: #2e2e2e; display: flex; flex-direction: column; justify-content: space-between; padding-bottom: 1px; }
.side-group { display: flex; flex-direction: column; }
.side-group.top { margin-top: -2px; }
.side-btn { width: 50px; height: 60px; display: flex; align-items: center; justify-content: center; }
.side-btn svg { width: 25px; height: 25px; fill: none; stroke: #8c8c92; stroke-width: 1.800; stroke-linecap: round; stroke-linejoin: round; }

.canvas-area { position: relative; flex: 1; background: #222; overflow: hidden; box-shadow: inset 6px 0 6px -6px #1a1a1a; }
.graph { position: absolute; left: 0; top: 0; width: 1860px; height: 671px; }

.group rect.gb { stroke-width: 1; }
.group text { font-size: 7.700px; font-family: "Liberation Sans", sans-serif; }
.g-in .gb { fill: #3c463c; stroke: #4c5f4c; } .g-in .gh { fill: #4c5f4c; } .g-in text { fill: #82a082; } .g-in .gc { fill: #7f9f7f; }
.g-ad .gb { fill: #293640; stroke: #2c4a60; } .g-ad .gh { fill: #2c4357; } .g-ad text { fill: #3f7aa3; } .g-ad .gc { fill: #3f7aa3; }
.g-pr .gb { fill: #40243f; stroke: #55285a; } .g-pr .gh { fill: #5a2856; } .g-pr text { fill: #93309a; } .g-pr .gc { fill: #93309a; }
.g-out .gb { fill: #3b4444; stroke: #4c5f5c; } .g-out .gh { fill: #4c5f5c; } .g-out text { fill: #74a098; } .g-out .gc { fill: #74a098; }
.g-gr .gb { fill: #293640; stroke: #2c4a60; } .g-gr .gh { fill: #2c4357; } .g-gr text { fill: #3f7aa3; }

.wires path { fill: none; stroke-width: 1.100; }
.w-g { stroke: #98a698; }
.w-l { stroke: #b49ed8; }
.w-y { stroke: #e6c000; }
.w-o { stroke: #f0a030; }
.w-p { stroke: #de8ad8; }
.w-r { stroke: #e2606a; }
.w-b { stroke: #58a8e4; }

.row { fill: #222; }
.pin { width: 3px; height: 3px; fill: #777; }
.d { width: 3px; height: 3px; }
.d.green { fill: #6fe86f; }
.d.gray { fill: #777; }
.d.lav { fill: #c6aee8; }
.d.pink { fill: #ee9aee; }
.d.yel { fill: #f4c800; }
.d.org { fill: #ff9f20; }
.d.red { fill: #ef6a6a; }
.d.blue { fill: #5cb0f0; }
.tg.off { fill: #333; }
.tg.on { fill: #a9b7cf; }
.tg.dim { fill: #6a4a78; }

.brown .body { fill: #563329; }
.brown .head { fill: #352320; }
.dark .body { fill: #353535; }
.dark .head { fill: #2f2f2f; }
.dark .row.soft { fill: #2c2c2c; }
.greenn .frame { fill: #2e4a2e; }
.greenn .body { fill: #375737; }
.greenn .head { fill: #1f2e1f; }
.yellow .body { fill: #655535; }
.yellow .head { fill: #443022; }
.plum .body { fill: #633865; fill-opacity: .92; }
.plum .head { fill: #57325c; fill-opacity: .92; }
.plum .row { fill: #55305a; }
.purple .body { fill: #572a6c; fill-opacity: .92; }
.purple .head { fill: #4c2b55; fill-opacity: .92; }
.purple .row { fill: #4b2c58; }
.selected { fill: none; stroke: #c40000; stroke-width: 3; }
.thumb-a { fill: #e8e8ee; }
.thumb-b { fill: #5a8a4a; }

/* tabs */
.tabs { position: relative; height: 53px; display: flex; align-items: stretch; }
.tab { width: 235px; background: #363636; display: flex; align-items: center; padding: 0 0 3px 13px; position: relative; }
.tab-name { font-size: 21px; color: #fff; }
.tab-name.muted { color: #777; }
.tab-dot { position: absolute; width: 10px; height: 10px; border-radius: 50%; background: #fff; right: 19px; top: 20px; }
.gray-dot { background: #888; }
.tab.active { width: 145px; padding: 0 0 0 13px; border: solid #4a4a4a; border-width: 0 1px; border-bottom: 2px solid #5f9ee8; }
.tab.active .tab-name { font: 300 20.500px/28px "Noto Sans CJK TC", sans-serif; }
.tab.active .tab-dot { right: 19px; }
.tab-add { width: 22px; height: 22px; margin: 15px 0 0 19px; }

.stats { position: absolute; left: 22px; bottom: 18px; font-size: 15px; line-height: 19.500px; color: #777; }
.zoombar { position: absolute; left: 1783px; top: 383px; width: 62px; height: 272px; background: #252527; border: 1px solid #3a3a40; border-radius: 7px; display: flex; flex-direction: column; align-items: center; justify-content: space-between; padding: 14px 0; }
.zoombar svg { width: 25px; height: 25px; fill: none; stroke: #d0d0d0; stroke-width: 2; }
.zoombar svg.thin { stroke-width: 1.700; }

/* bottom bar */
.bottombar { height: 70px; flex: none; background: #353535; display: flex; align-items: flex-start; padding: 0 7px 0 3px; }
.resize-feed { margin-top: 15px; width: 137px; height: 49px; background: #161616; border-radius: 8px; display: flex; align-items: center; padding-left: 8px; gap: 6px; font-size: 18px; color: #fff; }
.resize-ic { width: 15px; height: 15px; }
.runbar { margin: 3px 0 0 616px; width: 412px; height: 66px; background: #171717; border: 1px solid #3c3c3c; border-radius: 10px; display: flex; align-items: center; padding-left: 10px; }
.grip { width: 9px; height: 17px; }
.run { margin-left: 12px; width: 170px; height: 54px; background: #60a5fa; border-radius: 8px 0 0 8px; display: flex; align-items: center; padding-left: 21px; font: 300 20px/28px "Noto Sans CJK SC", sans-serif; color: #222c3a; }
.play { width: 18px; height: 22px; }
.run span { margin-left: 15px; }
.run-chev { width: 20px; height: 12px; margin-left: 35px; }
.count { width: 84px; height: 54px; background: #050505; border: 1px solid #444; border-left: 0; border-radius: 0 8px 8px 0; display: flex; align-items: center; padding-left: 21px; font-size: 22px; }
.steppers { margin-left: 27px; height: 34px; display: flex; flex-direction: column; justify-content: space-between; }
.steppers svg { width: 14px; height: 9px; }
.run-x { width: 19px; height: 19px; margin-left: 21px; }
.run-stop { width: 24px; height: 24px; margin-left: 39px; }
.feed-btn { margin-top: 15px; height: 48px; background: #222; border: 3px solid #464646; border-radius: 8px; font-size: 20px; color: #fff; }
.clear { width: 114px; margin-left: auto; }
.close { width: 49px; margin-left: 12px; display: flex; align-items: center; justify-content: center; }
.close svg { width: 20px; height: 20px; }

/* taskbar */
.taskbar { height: 68px; flex: none; display: grid; grid-template-columns: 592px auto 1fr; background: linear-gradient(90deg, #25231c 0%, #1f1d1d 25%, #1d1b22 50%, #2a2022 66%, #1e1b20 80%, #1b1a1f 100%); font-family: "Noto Sans", sans-serif; }
.tb-left { padding: 21px 0 0 19px; }
.widgets { width: 36px; height: 32px; }
.tb-apps { display: flex; }
.tile { position: relative; width: 66px; height: 68px; display: flex; justify-content: center; padding-top: 20px; }
.tile svg { width: 36px; height: 36px; position: relative; }
.run-dot::after { content: ""; position: absolute; left: 29px; bottom: 2px; width: 8px; height: 5px; border-radius: 3px; background: #999; }
.tile.active::before { content: ""; position: absolute; left: 4px; top: 7px; width: 59px; height: 60px; border-radius: 6px; background: #2e2e2e; }
.tile.active::after { content: ""; position: absolute; left: 21px; bottom: 2px; width: 24px; height: 5px; border-radius: 3px; background: #0a8cff; }
.badge { position: absolute; left: 42px; top: 12px; width: 22px; height: 22px; border-radius: 50%; background: #c42b1c; font: 400 15px/22px "Noto Sans", sans-serif; text-align: center; color: #fff; }
.tray { display: flex; align-items: center; position: relative; }
.tray-chev { width: 18px; height: 10px; margin-left: 228px; margin-top: 3px; }
.lang { width: 34px; margin-left: 25px; display: flex; flex-direction: column; align-items: center; font-size: 16.500px; line-height: 22px; color: #f0f0f0; margin-top: 3px; }
.tray-wifi { width: 24px; height: 18px; margin-left: 28px; margin-top: 3px; }
.tray-vol { width: 23px; height: 18px; margin-left: 12px; margin-top: 3px; }
.tray-bat { width: 24px; height: 17px; margin-left: 13px; margin-top: 3px; }
.clock { width: 102px; display: flex; flex-direction: column; align-items: flex-end; font-size: 17.300px; line-height: 22px; color: #f0f0f0; margin-top: 3px; }
.notif { width: 24px; height: 24px; border-radius: 50%; margin-left: 12px; margin-top: 3px; background: #0a8cff; color: #0c1520; font: 400 14px/24px "Noto Sans", sans-serif; text-align: center; }
```
